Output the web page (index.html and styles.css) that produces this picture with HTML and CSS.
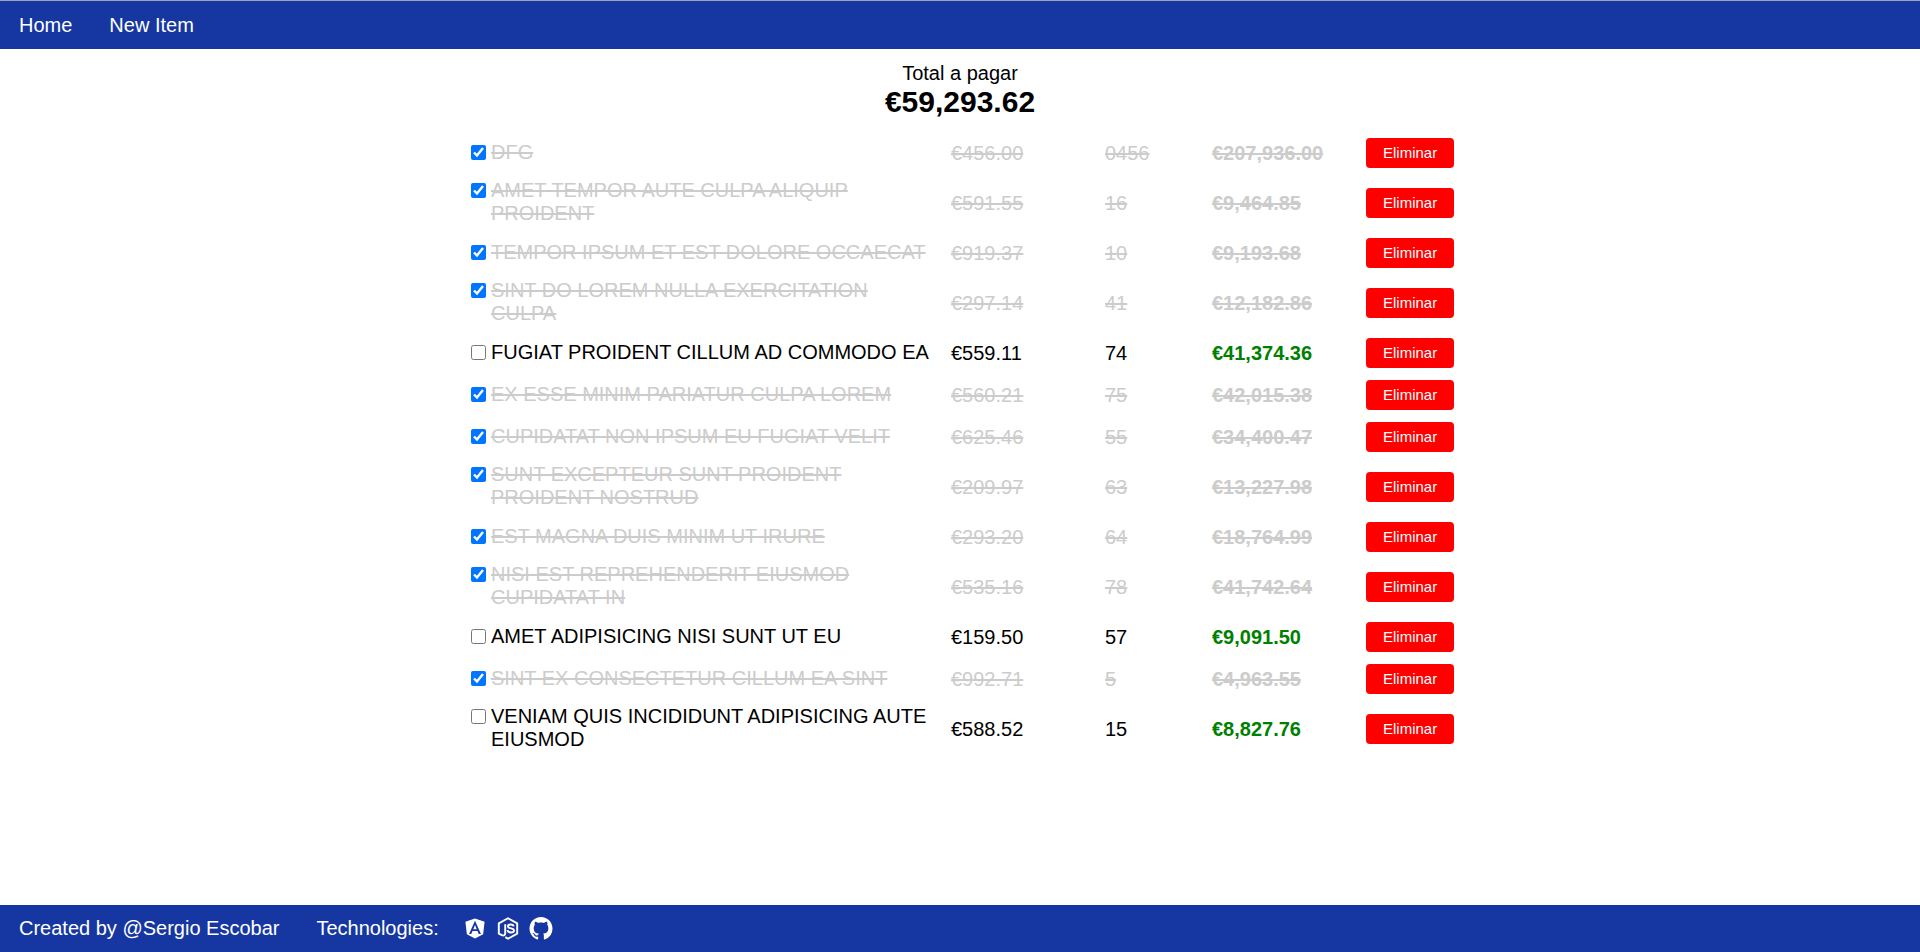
FILE: index.html
```
<!DOCTYPE html>
<html lang="es">
<head>
<meta charset="utf-8">
<title>Total a pagar</title>
<link rel="stylesheet" href="styles.css">
</head>
<body>
<header class="bar header">
  <nav class="bar-content">
    <a class="bar-link" href="#home">Home</a>
    <a class="bar-link" href="#new">New Item</a>
  </nav>
</header>
<main class="main">
  <section class="total">
    <p class="total-label">Total a pagar</p>
    <p class="total-value">€59,293.62</p>
  </section>
  <table class="items">
    <colgroup><col class="col-name"><col class="col-price"><col class="col-quantity"><col class="col-sum"><col class="col-action"></colgroup>
    <tbody>
    <tr class="done"><td class="item"><label class="name"><input class="check" type="checkbox" checked><span>DFG</span></label></td><td>€456.00</td><td>0456</td><td class="sum">€207,936.00</td><td class="action"><button class="remove" type="button">Eliminar</button></td></tr>
    <tr class="done"><td class="item"><label class="name"><input class="check" type="checkbox" checked><span>AMET TEMPOR AUTE CULPA ALIQUIP PROIDENT</span></label></td><td>€591.55</td><td>16</td><td class="sum">€9,464.85</td><td class="action"><button class="remove" type="button">Eliminar</button></td></tr>
    <tr class="done"><td class="item"><label class="name"><input class="check" type="checkbox" checked><span>TEMPOR IPSUM ET EST DOLORE OCCAECAT</span></label></td><td>€919.37</td><td>10</td><td class="sum">€9,193.68</td><td class="action"><button class="remove" type="button">Eliminar</button></td></tr>
    <tr class="done"><td class="item"><label class="name"><input class="check" type="checkbox" checked><span>SINT DO LOREM NULLA EXERCITATION CULPA</span></label></td><td>€297.14</td><td>41</td><td class="sum">€12,182.86</td><td class="action"><button class="remove" type="button">Eliminar</button></td></tr>
    <tr><td class="item"><label class="name"><input class="check" type="checkbox"><span>FUGIAT PROIDENT CILLUM AD COMMODO EA</span></label></td><td>€559.11</td><td>74</td><td class="sum">€41,374.36</td><td class="action"><button class="remove" type="button">Eliminar</button></td></tr>
    <tr class="done"><td class="item"><label class="name"><input class="check" type="checkbox" checked><span>EX ESSE MINIM PARIATUR CULPA LOREM</span></label></td><td>€560.21</td><td>75</td><td class="sum">€42,015.38</td><td class="action"><button class="remove" type="button">Eliminar</button></td></tr>
    <tr class="done"><td class="item"><label class="name"><input class="check" type="checkbox" checked><span>CUPIDATAT NON IPSUM EU FUGIAT VELIT</span></label></td><td>€625.46</td><td>55</td><td class="sum">€34,400.47</td><td class="action"><button class="remove" type="button">Eliminar</button></td></tr>
    <tr class="done"><td class="item"><label class="name"><input class="check" type="checkbox" checked><span>SUNT EXCEPTEUR SUNT PROIDENT PROIDENT NOSTRUD</span></label></td><td>€209.97</td><td>63</td><td class="sum">€13,227.98</td><td class="action"><button class="remove" type="button">Eliminar</button></td></tr>
    <tr class="done"><td class="item"><label class="name"><input class="check" type="checkbox" checked><span>EST MAGNA DUIS MINIM UT IRURE</span></label></td><td>€293.20</td><td>64</td><td class="sum">€18,764.99</td><td class="action"><button class="remove" type="button">Eliminar</button></td></tr>
    <tr class="done"><td class="item"><label class="name"><input class="check" type="checkbox" checked><span>NISI EST REPREHENDERIT EIUSMOD CUPIDATAT IN</span></label></td><td>€535.16</td><td>78</td><td class="sum">€41,742.64</td><td class="action"><button class="remove" type="button">Eliminar</button></td></tr>
    <tr><td class="item"><label class="name"><input class="check" type="checkbox"><span>AMET ADIPISICING NISI SUNT UT EU</span></label></td><td>€159.50</td><td>57</td><td class="sum">€9,091.50</td><td class="action"><button class="remove" type="button">Eliminar</button></td></tr>
    <tr class="done"><td class="item"><label class="name"><input class="check" type="checkbox" checked><span>SINT EX CONSECTETUR CILLUM EA SINT</span></label></td><td>€992.71</td><td>5</td><td class="sum">€4,963.55</td><td class="action"><button class="remove" type="button">Eliminar</button></td></tr>
    <tr><td class="item"><label class="name"><input class="check" type="checkbox"><span>VENIAM QUIS INCIDIDUNT ADIPISICING AUTE EIUSMOD</span></label></td><td>€588.52</td><td>15</td><td class="sum">€8,827.76</td><td class="action"><button class="remove" type="button">Eliminar</button></td></tr>
    </tbody>
  </table>
</main>
<footer class="bar footer">
  <div class="bar-content">
    <span>Created by @Sergio Escobar</span>
    <div class="tech">
      <span>Technologies:</span>
      <div class="icons">
        <svg class="icon" viewBox="0 0 24 24" role="img" aria-label="Angular"><path fill="#fff" fill-rule="evenodd" d="M12 1.5 22 5 20.5 18 12 22.5 3.5 18 2 5ZM12 4 5.8 17.8H8.1L9.4 14.7H14.6L15.9 17.8H18.2ZM12 8.3 13.8 12.8H10.2Z"/></svg>
        <svg class="icon" viewBox="0 0 24 24" role="img" aria-label="Node.js"><g fill="none" stroke="#fff" stroke-width="2" stroke-linejoin="round"><path d="M9.2 21 12 22.7 21.6 17.3V6.7L12 1.3 2.4 6.7V17.3L5.6 19C7.8 19.9 9.1 18.7 9.1 17V7.6"/><path d="M17.9 9.7C17.7 8.2 16.4 7.8 14.8 7.8 13 7.8 12 8.5 12 9.8 12 12.8 18.3 10.9 18.3 14 18.3 15.5 16.9 16.1 15 16.1 13 16.1 11.7 15.4 11.6 13.6"/></g></svg>
        <svg class="icon" viewBox="0 0 16 16" role="img" aria-label="GitHub"><path fill="#fff" d="M8 0C3.58 0 0 3.58 0 8c0 3.54 2.29 6.53 5.47 7.59.4.07.55-.17.55-.38 0-.19-.01-.82-.01-1.49-2.01.37-2.53-.49-2.69-.94-.09-.23-.48-.94-.82-1.13-.28-.15-.68-.52-.01-.53.63-.01 1.08.58 1.23.82.72 1.21 1.87.87 2.33.66.07-.52.28-.87.51-1.07-1.78-.2-3.64-.89-3.64-3.95 0-.87.31-1.59.82-2.15-.08-.2-.36-1.02.08-2.12 0 0 .67-.21 2.2.82.64-.18 1.32-.27 2-.27s1.36.09 2 .27c1.53-1.04 2.2-.82 2.2-.82.44 1.1.16 1.92.08 2.12.51.56.82 1.27.82 2.15 0 3.07-1.87 3.75-3.65 3.95.29.25.54.73.54 1.48 0 1.07-.01 1.93-.01 2.2 0 .21.15.46.55.38A8.01 8.01 0 0 0 16 8c0-4.42-3.58-8-8-8Z"/></svg>
      </div>
    </div>
  </div>
</footer>
</body>
</html>
```
FILE: styles.css
```
* {
  box-sizing: border-box;
}

body {
  display: flex;
  flex-direction: column;
  min-height: 100vh;
  margin: 0;
  background: #fff;
  color: #000;
  font: 20px/23px Arial, "Liberation Sans", sans-serif;
}

.bar {
  background: #1637a1;
  color: #fff;
}

.header {
  padding: 13px 19px 12px;
  border-top: 1px solid #9aa5bd;
}

.footer {
  padding: 12px 19px;
}

.bar-content {
  display: flex;
  align-items: center;
  gap: 37px;
}

.bar-link {
  color: inherit;
  text-decoration: none;
}

.main {
  flex: 1;
}

.total {
  padding: 13px 0;
  text-align: center;
}

.total-label,
.total-value {
  margin: 0;
}

.total-value {
  font-size: 30px;
  font-weight: bold;
  line-height: 34px;
}

.items {
  width: 988px;
  max-width: 100%;
  margin: 0 auto;
  border-collapse: collapse;
  table-layout: fixed;
}

.col-name {
  width: 480px;
}

.col-price {
  width: 154px;
}

.col-quantity {
  width: 107px;
}

.col-sum {
  width: 154px;
}

.items td {
  padding: 6px 5px;
  vertical-align: middle;
}

.items .item {
  padding-top: 5px;
  padding-bottom: 7px;
}

.name {
  display: flex;
  align-items: flex-start;
  gap: 5px;
  padding-right: 12px;
}

.check {
  flex: none;
  width: 15px;
  height: 15px;
  margin: 4px 0 0;
  accent-color: #0075ff;
}

.done {
  color: #ccc;
}

.done td:not(.action) {
  text-decoration: line-through 2px;
}

.sum {
  color: green;
  font-weight: bold;
}

.done .sum {
  color: inherit;
}

.items .action {
  padding-right: 0;
  text-align: right;
}

.remove {
  display: block;
  margin-left: auto;
  padding: 6px 17px;
  border: 0;
  border-radius: 4px;
  background: red;
  color: #fff;
  font: 15px/18px Arial, "Liberation Sans", sans-serif;
  cursor: pointer;
}

.tech {
  display: flex;
  align-items: center;
  gap: 24px;
}

.icons {
  display: flex;
  gap: 9px;
}

.icon {
  display: block;
  width: 24px;
  height: 23px;
}
```
